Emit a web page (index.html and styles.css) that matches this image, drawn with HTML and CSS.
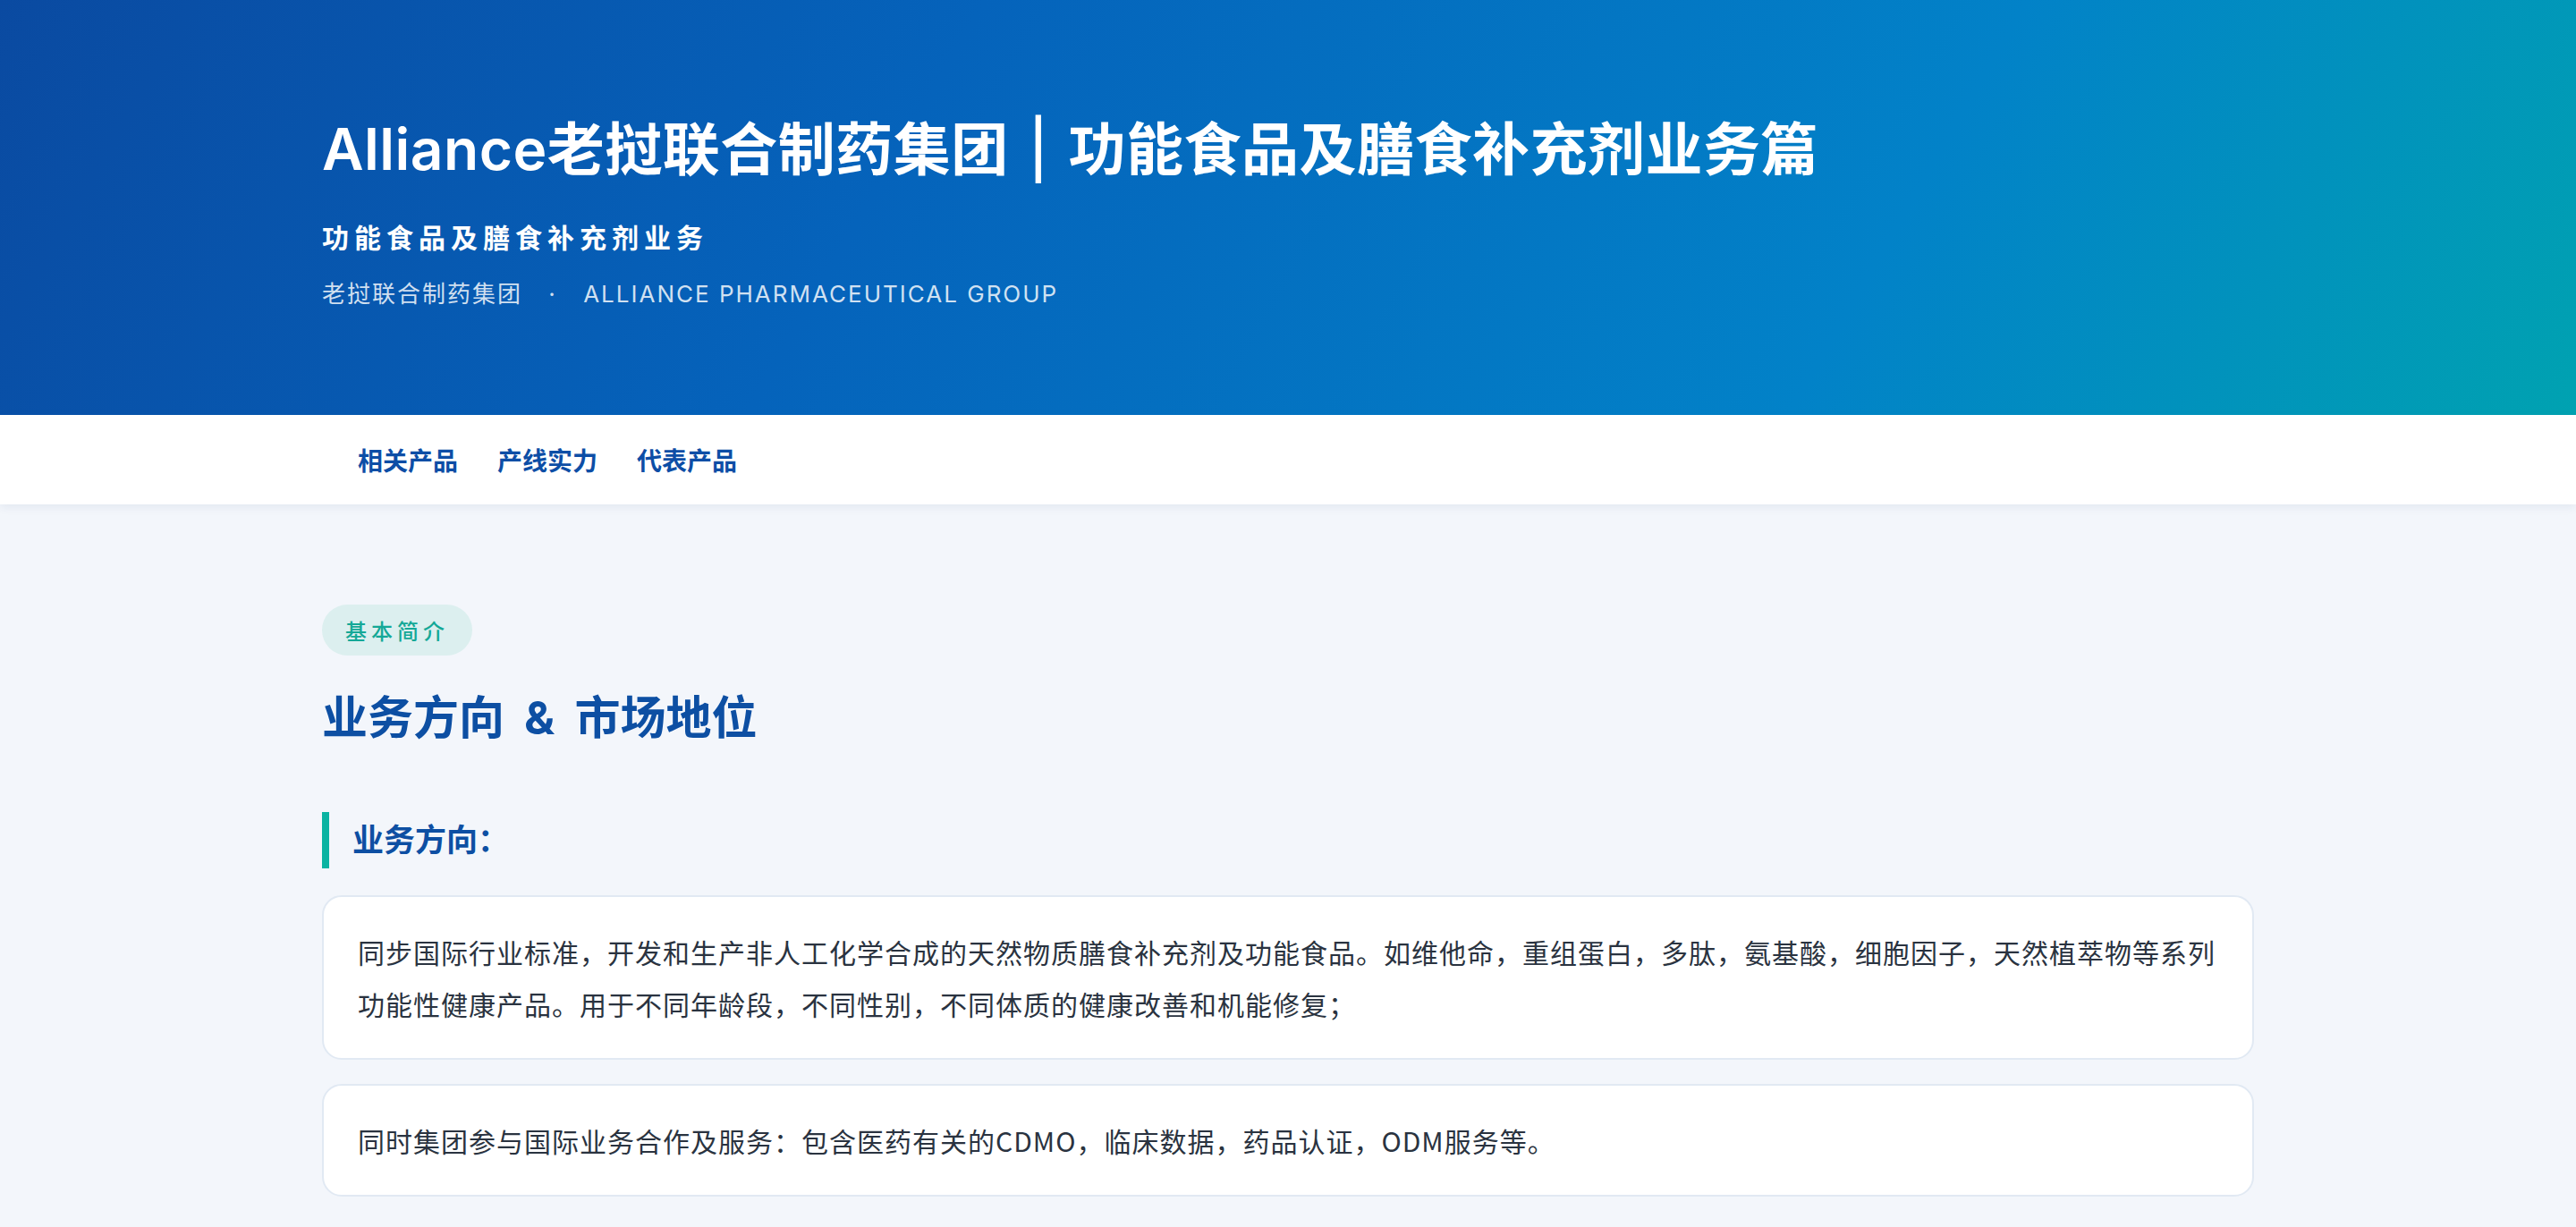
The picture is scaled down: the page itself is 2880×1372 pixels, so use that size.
FILE: index.html
```html
<!DOCTYPE html>
<html lang="zh-CN">
<head>
    <meta charset="UTF-8">
    <meta name="viewport" content="width=device-width, initial-scale=1.0">
    <title>功能食品及膳食补充剂业务篇</title>
    <link rel="stylesheet" href="styles.css">
</head>
<body>
<header class="hero">
    <div class="wrap">
        <h1 class="hero-title">Alliance老挝联合制药集团<span class="sep">|</span>功能食品及膳食补充剂业务篇</h1>
        <p class="hero-sub">功能食品及膳食补充剂业务</p>
        <p class="hero-meta">
            <span>老挝联合制药集团</span>
            <span class="dot">·</span>
            <span class="en">ALLIANCE PHARMACEUTICAL GROUP</span>
        </p>
    </div>
</header>
<nav class="tabs">
    <div class="wrap tabs-inner">
        <a class="tab" href="#products">相关产品</a>
        <a class="tab" href="#lines">产线实力</a>
        <a class="tab" href="#featured">代表产品</a>
    </div>
</nav>
<main class="wrap content">
    <span class="tag">基本简介</span>
    <h2 class="section-title">业务方向 &amp; 市场地位</h2>
    <h3 class="block-title">业务方向：</h3>
    <div class="card">
        同步国际行业标准，开发和生产非人工化学合成的天然物质膳食补充剂及功能食品。如维他命，重组蛋白，多肽，氨基酸，细胞因子，天然植萃物等系列功能性健康产品。用于不同年龄段，不同性别，不同体质的健康改善和机能修复；
    </div>
    <div class="card">
        同时集团参与国际业务合作及服务：包含医药有关的CDMO，临床数据，药品认证，ODM服务等。
    </div>
</main>
</body>
</html>
```

FILE: styles.css
```css
* {
    box-sizing: border-box;
}
body {
    margin: 0;
    font-family: Inter, "Noto Sans CJK SC", sans-serif;
    background: #f3f6fb;
    color: #2a3340;
}
.wrap {
    max-width: 2160px;
    margin: 0 auto;
}

/* top banner */
.hero {
    height: 464px;
    padding-top: 125px;
    color: #fff;
    background: linear-gradient(120deg, #0a4aa1 0%, #0563bb 35%, #0282c8 72%, #00a2b1 100%);
}
.hero-title {
    margin: 0;
    font-size: 64px;
    line-height: 84px;
    font-weight: 600;
    letter-spacing: 0.5px;
}
.hero-title .sep {
    padding: 0 22px;
    font-weight: 500;
}
.hero-sub {
    margin: 36px 0 0;
    font-size: 30px;
    line-height: 42px;
    font-weight: 700;
    letter-spacing: 6px;
}
.hero-meta {
    margin: 24px 0 0;
    font-size: 26px;
    line-height: 36px;
    letter-spacing: 2px;
    color: rgba(255, 255, 255, 0.82);
}
.hero-meta .dot {
    margin: 0 20px;
}

/* tab bar */
.tabs {
    height: 100px;
    background: #fff;
    box-shadow: 0 3px 10px rgba(20, 60, 120, 0.08);
}
.tabs-inner {
    display: flex;
    align-items: center;
    height: 100%;
    padding-left: 18px;
}
.tab {
    padding: 0 22px;
    font-size: 28px;
    font-weight: 700;
    color: #0d4ea6;
    text-decoration: none;
}

/* content */
.content {
    padding-top: 112px;
}
.tag {
    display: inline-flex;
    align-items: center;
    height: 57px;
    padding: 0 26px;
    border-radius: 999px;
    background: #dcefef;
    color: #14a897;
    font-size: 24px;
    font-weight: 500;
    letter-spacing: 5px;
}
.section-title {
    margin: 35px 0 0;
    font-size: 51px;
    line-height: 70px;
    font-weight: 700;
    word-spacing: 10px;
    color: #0d4fa3;
}
.block-title {
    margin: 70px 0 30px;
    height: 63px;
    line-height: 63px;
    padding-left: 26px;
    border-left: 8px solid #0ab3a2;
    font-size: 35px;
    font-weight: 700;
    color: #0d4fa3;
}
.card {
    padding: 32px 34px 32px 38px;
    margin-bottom: 27px;
    background: #fff;
    border: 2px solid #e1e9f3;
    border-radius: 22px;
    font-family: "Noto Sans CJK SC", sans-serif;
    font-size: 30px;
    line-height: 58px;
    letter-spacing: 1px;
}
```
